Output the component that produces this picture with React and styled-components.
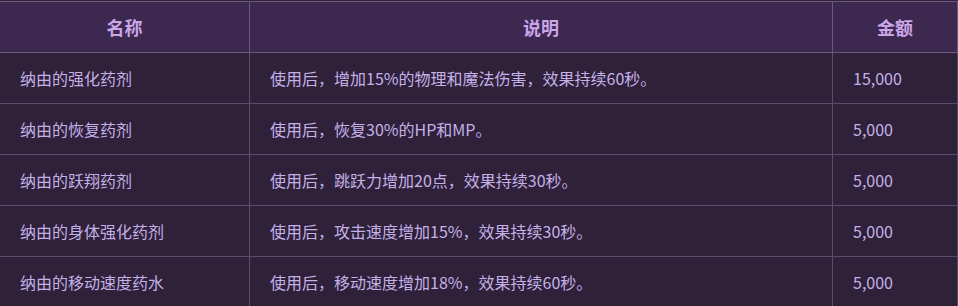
import React from "react";
import styled, { createGlobalStyle } from "styled-components";

const Global = createGlobalStyle`
  html, body { margin: 0; padding: 0; background: #2e2139; }
  body { font-family: "Noto Sans CJK SC", "Noto Sans", sans-serif; }
`;

const Frame = styled.div`
  width: 958px;
  height: 306px;
  overflow: hidden;
  padding-top: 1px;
  box-sizing: border-box;
`;

const Table = styled.table`
  border-collapse: collapse;
  width: 958px;
  margin-left: -1px;
  table-layout: fixed;
`;

const Th = styled.th`
  height: 50px;
  padding: 0;
  background: #3d2850;
  color: #c9a6e8;
  font-size: 18px;
  font-weight: 700;
  text-align: center;
  border: 1px solid #6d5a80;
`;

const Td = styled.td`
  height: 50px;
  padding: 0 0 0 20px;
  background: #2e2139;
  color: #c5b1e8;
  font-size: 16px;
  font-weight: 400;
  text-align: left;
  border: 1px solid #5c4c6c;
  white-space: nowrap;
`;

const rows = [
  ["纳由的强化药剂", "使用后，增加15%的物理和魔法伤害，效果持续60秒。", "15,000"],
  ["纳由的恢复药剂", "使用后，恢复30%的HP和MP。", "5,000"],
  ["纳由的跃翔药剂", "使用后，跳跃力增加20点，效果持续30秒。", "5,000"],
  ["纳由的身体强化药剂", "使用后，攻击速度增加15%，效果持续30秒。", "5,000"],
  ["纳由的移动速度药水", "使用后，移动速度增加18%，效果持续60秒。", "5,000"],
];

export default function App() {
  return (
    <Frame>
      <Global />
      <Table>
        <colgroup>
          <col style={{ width: 250 }} />
          <col style={{ width: 583 }} />
          <col style={{ width: 125 }} />
        </colgroup>
        <thead>
          <tr>
            <Th>名称</Th>
            <Th>说明</Th>
            <Th>金额</Th>
          </tr>
        </thead>
        <tbody>
          {rows.map((r) => (
            <tr key={r[0]}>
              <Td>{r[0]}</Td>
              <Td>{r[1]}</Td>
              <Td>{r[2]}</Td>
            </tr>
          ))}
        </tbody>
      </Table>
    </Frame>
  );
}
